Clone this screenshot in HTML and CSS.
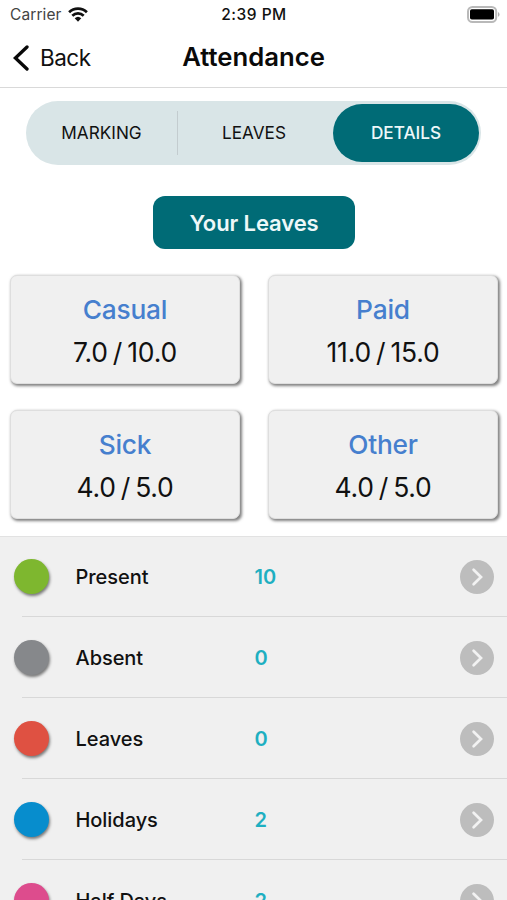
FILE: index.html
```html
<!DOCTYPE html>
<html lang="en">
<head>
<meta charset="utf-8">
<title>Attendance</title>
<link rel="stylesheet" href="styles.css">
</head>
<body>
<svg width="0" height="0" class="defs">
  <symbol id="chevron" viewBox="0 0 34 34"><circle cx="17" cy="17" r="17" fill="#bdbdbd"/><path d="M13.6 9.7 21 17l-7.4 7.3" fill="none" stroke="#f2f2f2" stroke-width="2.7" stroke-linecap="round" stroke-linejoin="miter"/></symbol>
</svg>
<header class="header">
  <div class="status">
    <div class="carrier"><span class="carrier-name">Carrier</span>
      <svg class="wifi" width="20" height="15" viewBox="0 0 20 15"><g fill="none" stroke="#111" stroke-width="2.7"><path d="M1.1 5.3a12.8 12.8 0 0 1 17.8 0"/><path d="M4.3 8.7a8.2 8.2 0 0 1 11.4 0"/></g><path d="M6.7 11.3a4.9 4.9 0 0 1 6.6 0L10 14.7z" fill="#111"/></svg>
    </div>
    <span class="time">2:39 PM</span>
    <svg class="battery" width="33" height="17" viewBox="0 0 33 17"><rect x="1" y="1" width="28.2" height="15" rx="4.5" fill="#fff" stroke="#b9b9b9" stroke-width="2"/><rect x="3" y="3.2" width="24" height="10.3" rx="1.8" fill="#000"/><path d="M31 6q1.5.6 1.5 2.4T31 10.8z" fill="#b0b0b0"/></svg>
  </div>
  <nav class="nav">
    <a class="back"><svg width="18" height="28" viewBox="0 0 18 28"><path d="M16 3 4.4 14 16 25" fill="none" stroke="#080808" stroke-width="3.3" stroke-linecap="round" stroke-linejoin="miter"/></svg><span>Back</span></a>
    <h1 class="title">Attendance</h1>
    <span></span>
  </nav>
</header>
<main>
  <div class="tabs">
    <div class="tab">MARKING</div>
    <div class="tab">LEAVES</div>
    <div class="tab active">DETAILS</div>
  </div>
  <button class="your-leaves">Your Leaves</button>
  <section class="cards">
    <article class="card"><h2>Casual</h2><p>7.0 / 10.0</p></article>
    <article class="card"><h2>Paid</h2><p>11.0 / 15.0</p></article>
    <article class="card"><h2>Sick</h2><p>4.0 / 5.0</p></article>
    <article class="card"><h2>Other</h2><p>4.0 / 5.0</p></article>
  </section>
  <ul class="list">
    <li class="row"><i class="dot present"></i><span class="label">Present</span><span class="count">10</span><svg class="go"><use href="#chevron"/></svg></li>
    <li class="row"><i class="dot absent"></i><span class="label">Absent</span><span class="count">0</span><svg class="go"><use href="#chevron"/></svg></li>
    <li class="row"><i class="dot leaves"></i><span class="label">Leaves</span><span class="count">0</span><svg class="go"><use href="#chevron"/></svg></li>
    <li class="row"><i class="dot holidays"></i><span class="label">Holidays</span><span class="count">2</span><svg class="go"><use href="#chevron"/></svg></li>
    <li class="row"><i class="dot half"></i><span class="label">Half Days</span><span class="count">2</span><svg class="go"><use href="#chevron"/></svg></li>
  </ul>
</main>
</body>
</html>
```
FILE: styles.css
```css
* { box-sizing: border-box; margin: 0; padding: 0; }
body {
  width: 507px;
  height: 900px;
  overflow: hidden;
  display: flex;
  flex-direction: column;
  background: #fff;
  color: #111;
  font-family: Inter, "Liberation Sans", sans-serif;
}
.defs { position: absolute; }
.header { height: 88px; border-bottom: 1px solid #d9d9d9; flex: none; }
.status {
  height: 29px;
  display: grid;
  grid-template-columns: 1fr auto 1fr;
  align-items: center;
  padding: 0 7px 0 10px;
}
.carrier { display: flex; align-items: center; gap: 6px; }
.carrier-name { font-size: 15.5px; letter-spacing: 0.1px; color: #444; }
.time { font-size: 15.5px; font-weight: 500; letter-spacing: 0.5px; margin-left: -2px; }
.battery { justify-self: end; }
.nav {
  height: 57px;
  display: grid;
  grid-template-columns: 1fr auto 1fr;
  align-items: center;
  padding: 0 11px;
}
.back { display: flex; align-items: center; gap: 11px; font-size: 22.5px; letter-spacing: -0.5px; }
.title { font-size: 25.7px; font-weight: 600; line-height: 30px; margin-top: -2px; color: #0a0a0a; }
.tabs {
  width: 455px;
  height: 64px;
  margin: 13px 26px 0;
  padding-right: 2px;
  display: flex;
  align-items: center;
  border-radius: 32px;
  background: #d9e5e7;
}
.tab {
  flex: none;
  width: 152px;
  display: flex;
  align-items: center;
  justify-content: center;
  height: 44px;
  padding-bottom: 1px;
  font-size: 17.2px;
}
.tab:first-child { border-right: 1px solid #c3cccf; }
.tab.active {
  width: 146px;
  margin-left: auto;
  height: 58px;
  border-radius: 29px;
  background: #006b76;
  color: #edf8f9;
  font-weight: 500;
}
.your-leaves {
  display: block;
  width: 202px;
  height: 53px;
  margin: 30.5px auto 0 153px;
  padding-top: 1px;
  border: 0;
  border-radius: 12px;
  background: #006b76;
  color: #edf8f9;
  font: 600 22px Inter, sans-serif;
  letter-spacing: -0.1px;
}
.cards {
  display: grid;
  grid-template-columns: 230px 230px;
  grid-auto-rows: 109px;
  gap: 25.5px 28px;
  margin: 26.5px 0 0 10px;
}
.card {
  padding-top: 17px;
  border: 1px solid #dedede;
  border-radius: 7px;
  background: #f0f0f0;
  box-shadow: 1.5px 1.5px 3px rgba(0, 0, 0, .5);
  text-align: center;
}
.card h2 { font-size: 26.3px; font-weight: 500; line-height: 34px; letter-spacing: -0.2px; color: #467fce; }
.card p { font-size: 26.5px; line-height: 34px; margin-top: 8px; letter-spacing: -0.2px; word-spacing: -2.2px; }
.list {
  margin-top: 17.5px;
  list-style: none;
  background: #f0f0f0;
  box-shadow: inset 0 1px #e2e2e2;
}
.row {
  height: 81px;
  display: grid;
  grid-template-columns: 61.5px 179px 1fr 34px;
  align-items: center;
  padding: 0 13px 0 14px;
  font-size: 20px;
  font-weight: 500;
  letter-spacing: -0.05px;
  background: linear-gradient(#d8d8d8, #d8d8d8) 22px 100% / 100% 1px no-repeat;
}
.dot { width: 35px; height: 35px; border-radius: 50%; box-shadow: 1px 2px 3px rgba(0, 0, 0, .5); }
.present { background: #7eb72f; }
.absent { background: #86888b; }
.leaves { background: #df5142; }
.holidays { background: #078dcd; }
.half { background: #dd4c8d; }
.count { color: #1eafc1; font-weight: 600; }
.go { width: 34px; height: 34px; }
```
